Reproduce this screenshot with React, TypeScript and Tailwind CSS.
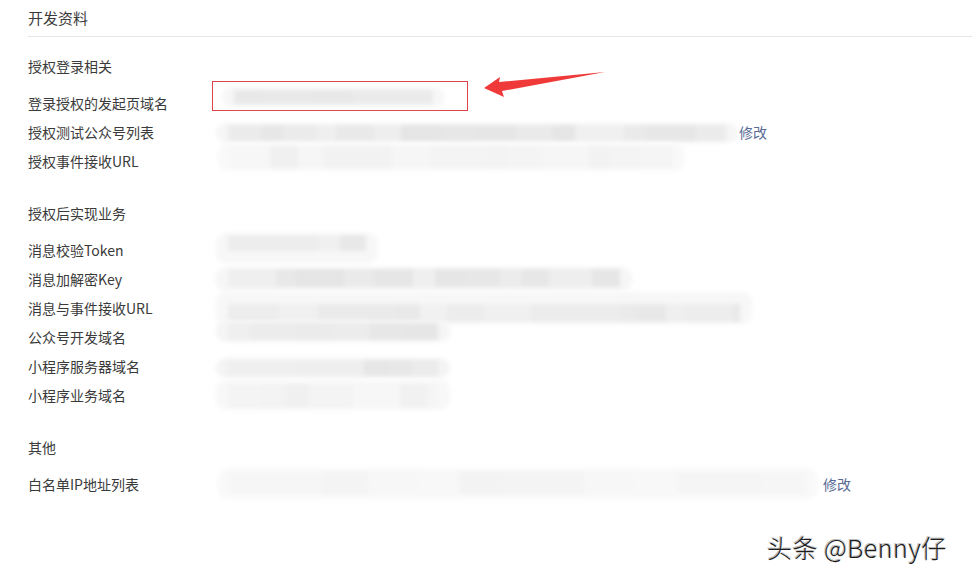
import React from "react";

function rand(seed: number) {
  let s = seed;
  return () => {
    s = (s * 9301 + 49297) % 233280;
    return s / 233280;
  };
}

type BlobProps = {
  w: number;
  h: number;
  dy?: number;
  bandTop: number;
  bandH: number;
  seed: number;
  base?: string;
  min?: number;
  range?: number;
};

function Blob({ w, h, dy = 0, bandTop, bandH, seed, base = "#f5f5f5", min = 228, range = 14 }: BlobProps) {
  const r = rand(seed);
  const cells: { cw: number; c: string }[] = [];
  let x = 0;
  while (x < w - 20) {
    const cw = 18 + Math.floor(r() * 34);
    const shade = Math.floor(min + r() * range);
    cells.push({ cw, c: `rgb(${shade},${shade},${shade})` });
    x += cw;
  }
  return (
    <div
      className="shrink-0 rounded-[10px] blur-[2px] flex flex-col px-[12px]"
      style={{ width: w, height: h, transform: `translateY(${dy}px)`, background: base, paddingTop: bandTop }}
    >
      <div className="flex overflow-hidden w-full" style={{ height: bandH }}>
        {cells.map((c, i) => (
          <div key={i} className="shrink-0 h-full" style={{ width: c.cw, background: c.c }} />
        ))}
      </div>
    </div>
  );
}

const font = "font-['Microsoft_YaHei','Noto_Sans_CJK_SC',sans-serif]";

function Row({ label, children }: { label: string; children?: React.ReactNode }) {
  return (
    <div className="flex items-center h-[29px]">
      <div className="w-[188px] shrink-0 text-[14px] text-[#3a3a3a] leading-[20px]">{label}</div>
      <div className="flex items-center">{children}</div>
    </div>
  );
}

function Edit() {
  return <span className="text-[14px] text-[#576b95] leading-[20px] ml-[1px]">修改</span>;
}

export default function App() {
  return (
    <div className={`relative w-[972px] h-[577px] overflow-hidden bg-white ${font}`}>
      <div className="pl-[28px]">
        <div className="h-[37px] border-b border-[#e7e7e7] flex items-center text-[15px] text-[#3a3a3a]">开发资料</div>

        <div className="mt-[19px] h-[20px] text-[14px] leading-[20px] text-[#3a3a3a]">授权登录相关</div>
        <div className="mt-[12px]">
          <Row label="登录授权的发起页域名">
            <div className="ml-[-4px] w-[256px] h-[30px] border border-[#e0444b] -translate-y-[7px] flex items-center pl-[9px]">
              <Blob w={223} h={20} dy={1} bandTop={3} bandH={14} seed={3} base="#f7f7f7" min={230} range={10} />
            </div>
          </Row>
          <Row label="授权测试公众号列表">
            <Blob w={522} h={20} dy={1} bandTop={2} bandH={16} seed={7} base="#f6f6f6" min={229} range={12} />
            <Edit />
          </Row>
          <Row label="授权事件接收URL">
            <div className="ml-[2px]">
              <Blob w={467} h={28} dy={-4} bandTop={3} bandH={22} seed={11} base="#f9f9f9" min={240} range={8} />
            </div>
          </Row>
        </div>

        <div className="mt-[28px] h-[20px] text-[14px] leading-[20px] text-[#3a3a3a]">授权后实现业务</div>
        <div className="mt-[12px]">
          <Row label="消息校验Token">
            <Blob w={162} h={30} dy={-2} bandTop={2} bandH={16} seed={13} base="#f7f7f7" min={232} range={10} />
          </Row>
          <Row label="消息加解密Key">
            <Blob w={416} h={24} dy={0} bandTop={2} bandH={18} seed={17} base="#f6f6f6" min={228} range={12} />
          </Row>
          <Row label="消息与事件接收URL">
            <Blob w={536} h={32} dy={0} bandTop={12} bandH={18} seed={19} base="#f7f7f7" min={232} range={10} />
          </Row>
          <Row label="公众号开发域名">
            <Blob w={234} h={22} dy={-6} bandTop={3} bandH={17} seed={23} base="#f5f5f5" min={230} range={10} />
          </Row>
          <Row label="小程序服务器域名">
            <Blob w={234} h={20} dy={2} bandTop={2} bandH={16} seed={29} base="#f4f4f4" min={230} range={10} />
          </Row>
          <Row label="小程序业务域名">
            <Blob w={234} h={30} dy={0} bandTop={4} bandH={24} seed={31} base="#f8f8f8" min={240} range={8} />
          </Row>
        </div>

        <div className="mt-[28px] h-[20px] text-[14px] leading-[20px] text-[#3a3a3a]">其他</div>
        <div className="mt-[12px]">
          <Row label="白名单IP地址列表">
            <div className="ml-[2px] mr-[4px]">
              <Blob w={600} h={31} dy={0} bandTop={4} bandH={22} seed={37} base="#f9f9f9" min={242} range={7} />
            </div>
            <Edit />
          </Row>
        </div>
      </div>

      <svg className="absolute left-[480px] top-[66px]" width="130" height="36" viewBox="480 66 130 36">
        <path d="M484,88 L500,77 L499,82 L605,72 L502,91 L504,97 Z" fill="#f03a3a" />
      </svg>

      <div className="absolute left-[767px] top-[530px] text-[25px] leading-[34px] tracking-[0.5px] text-[#1e1e1e] [text-shadow:1px_1px_0_#fff,-1px_-1px_0_#bbb,1px_-1px_0_#ddd] font-['Noto_Sans_CJK_SC',sans-serif] font-light">
        头条 @Benny仔
      </div>
    </div>
  );
}
